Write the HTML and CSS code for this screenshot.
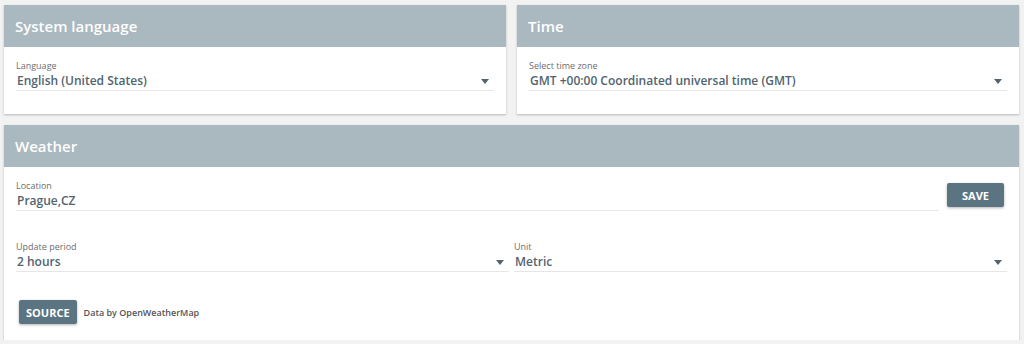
FILE: index.html
```html
<!DOCTYPE html>
<html lang="en">
<head>
  <meta charset="UTF-8">
  <title>Settings</title>
  <link rel="stylesheet" href="styles.css">
</head>
<body>
  <div class="grid">
    <div class="card">
      <div class="card-header">System language</div>
      <div class="card-body">
        <div class="field">
          <div class="label">Language</div>
          <div class="select">English (United States)<span class="caret"></span></div>
        </div>
      </div>
    </div>
    <div class="card">
      <div class="card-header">Time</div>
      <div class="card-body">
        <div class="field">
          <div class="label">Select time zone</div>
          <div class="select">GMT +00:00 Coordinated universal time (GMT)<span class="caret"></span></div>
        </div>
      </div>
    </div>
    <div class="card wide">
      <div class="card-header">Weather</div>
      <div class="card-body">
        <div class="row">
          <div class="field grow">
            <div class="label">Location</div>
            <div class="input">Prague,CZ</div>
          </div>
          <button class="btn save">SAVE</button>
        </div>
        <div class="row two">
          <div class="field">
            <div class="label">Update period</div>
            <div class="select">2 hours<span class="caret"></span></div>
          </div>
          <div class="field">
            <div class="label">Unit</div>
            <div class="select">Metric<span class="caret"></span></div>
          </div>
        </div>
        <div class="source">
          <button class="btn">SOURCE</button>
          <span class="note">Data by OpenWeatherMap</span>
        </div>
      </div>
    </div>
  </div>
</body>
</html>
```
FILE: styles.css
```css
body {
  margin: 0;
  padding: 5px 5px 0 4px;
  font-family: "Open Sans", sans-serif;
  background-color: #f2f2f2;
}

.grid {
  display: grid;
  grid-template-columns: 1fr 1fr;
  column-gap: 11px;
  row-gap: 11px;
}

.card {
  background-color: #fff;
  box-shadow: 0 1px 2px rgba(0, 0, 0, 0.25);
  height: 109px;
}

.card.wide {
  grid-column: 1 / 3;
  height: 215px;
}

.card-header {
  background-color: #aab8bf;
  color: #fff;
  font-size: 15px;
  font-weight: 600;
  height: 42px;
  line-height: 42px;
  padding-left: 11px;
}

.card-body {
  padding: 12px 12px 0 12px;
}

.label {
  font-size: 9px;
  color: #6d6d6d;
  height: 13px;
  line-height: 13px;
}

.select, .input {
  position: relative;
  font-size: 12px;
  font-weight: 600;
  color: #51646f;
  height: 18px;
  line-height: 18px;
  border-bottom: 1px solid #e6e6e6;
  padding-left: 1px;
}

.caret {
  position: absolute;
  right: 5px;
  top: 7px;
  border-left: 4px solid transparent;
  border-right: 4px solid transparent;
  border-top: 5px solid #51646f;
}

.row {
  display: flex;
  align-items: center;
  gap: 8px;
}

.grow {
  flex: 1;
}

.row.two {
  display: grid;
  grid-template-columns: 1fr 1fr;
  gap: 5px;
  margin-top: 29px;
}

.btn {
  background-color: #5b7482;
  color: #fff;
  border: none;
  border-radius: 2px;
  font-family: inherit;
  font-size: 11px;
  font-weight: 700;
  height: 24px;
  padding: 0 7px;
  box-shadow: 0 1px 3px rgba(0, 0, 0, 0.3);
}

.save {
  width: 57px;
  margin-right: 3px;
}

.source {
  display: flex;
  align-items: center;
  gap: 7px;
  margin-top: 28px;
  padding-left: 3px;
}

.note {
  font-size: 9px;
  font-weight: 600;
  color: #555;
}
```
